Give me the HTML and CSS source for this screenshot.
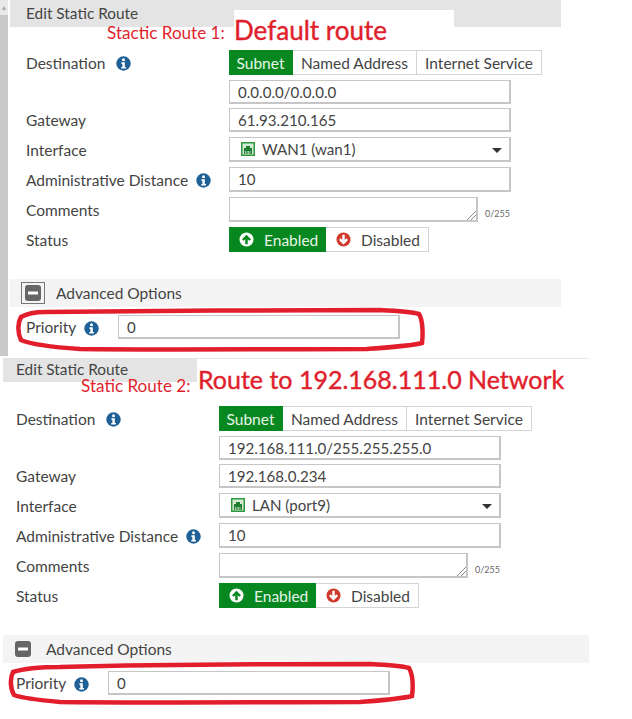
FILE: index.html
```html
<!DOCTYPE html>
<html lang="en">
<head>
<meta charset="utf-8">
<title>Edit Static Route</title>
<link rel="stylesheet" href="styles.css">
</head>
<body>
<svg width="0" height="0" class="defs">
  <defs>
    <symbol id="info" viewBox="0 0 16 16">
      <circle cx="8" cy="8" r="7.7" fill="#1f6096"/>
      <circle cx="8" cy="4" r="1.6" fill="#fff"/>
      <path d="M5.8 6.6h3.6v5h1.2v1.8H5.6v-1.8h1.2V8.4h-1z" fill="#fff"/>
    </symbol>
    <symbol id="up" viewBox="0 0 16 16">
      <circle cx="8" cy="8" r="7.5" fill="currentColor"/>
      <path d="M8 2.8 12.8 7.6 11 9.3 9.3 7.6V13H6.7V7.6L5 9.3 3.2 7.6z" fill="var(--glyph)"/>
    </symbol>
    <symbol id="down" viewBox="0 0 16 16">
      <circle cx="8" cy="8" r="7.5" fill="currentColor"/>
      <path d="M8 13.2 3.2 8.4 5 6.7 6.7 8.4V3h2.6v5.4L11 6.7l1.8 1.7z" fill="var(--glyph)"/>
    </symbol>
    <symbol id="port" viewBox="0 0 14 14">
      <rect width="14" height="14" fill="#2c9a3c"/>
      <rect x="1.5" y="1.5" width="11" height="11" fill="#d7e8d4"/>
      <path d="M3 12V6h2V4h4v2h2v6z" fill="#1f7f30"/>
      <path d="M4.5 9v3M6 9v3M7.5 9v3M9 9v3" stroke="#d7e8d4" stroke-width=".7"/>
    </symbol>
    <symbol id="minus" viewBox="0 0 16 16">
      <rect width="16" height="16" rx="3" fill="#666"/>
      <rect x="3" y="6.5" width="10" height="3" fill="#fff"/>
    </symbol>
  </defs>
</svg>

<div class="sheet">
  <section class="shot shot-one">
    <div class="scrollbar"><span class="scroll-cap">&#9650;</span></div>
    <div class="panel">
      <header class="title-bar"><span class="title">Edit Static Route</span></header>
      <div class="form">
        <div class="row">
          <div class="label">Destination<svg class="info info-wide"><use href="#info"/></svg></div>
          <div class="segments">
            <span class="seg seg-on seg-subnet">Subnet</span>
            <span class="seg seg-named">Named Address</span>
            <span class="seg seg-service">Internet Service</span>
          </div>
        </div>
        <div class="row row-low row-close">
          <div class="label"></div>
          <div class="field">0.0.0.0/0.0.0.0</div>
        </div>
        <div class="row row-low">
          <div class="label">Gateway</div>
          <div class="field">61.93.210.165</div>
        </div>
        <div class="row">
          <div class="label">Interface</div>
          <div class="field field-select">
            <svg class="port"><use href="#port"/></svg>WAN1 (wan1)<span class="caret"></span>
          </div>
        </div>
        <div class="row">
          <div class="label">Administrative Distance<svg class="info"><use href="#info"/></svg></div>
          <div class="field">10</div>
        </div>
        <div class="row">
          <div class="label">Comments</div>
          <div class="area">
            <svg class="grip" viewBox="0 0 10 10"><path d="M1 10 10 1M5 10l5-5" stroke="#888" fill="none"/></svg>
          </div>
          <span class="count">0/255</span>
        </div>
        <div class="row row-last">
          <div class="label">Status</div>
          <div class="segments">
            <span class="seg seg-on seg-enabled"><svg class="state state-up"><use href="#up"/></svg>Enabled</span>
            <span class="seg seg-disabled"><svg class="state state-down"><use href="#down"/></svg>Disabled</span>
          </div>
        </div>
      </div>
      <div class="advanced">
        <span class="minus-box"><svg class="minus"><use href="#minus"/></svg></span>
        <span>Advanced Options</span>
      </div>
      <div class="priority">
        <div class="label label-short">Priority<svg class="info"><use href="#info"/></svg></div>
        <div class="field">0</div>
      </div>
    </div>
  </section>

  <section class="shot shot-two">
    <div class="panel">
      <header class="title-bar"><span class="title">Edit Static Route</span></header>
      <div class="form">
        <div class="row">
          <div class="label">Destination<svg class="info info-wide"><use href="#info"/></svg></div>
          <div class="segments">
            <span class="seg seg-on seg-subnet">Subnet</span>
            <span class="seg seg-named">Named Address</span>
            <span class="seg seg-service">Internet Service</span>
          </div>
        </div>
        <div class="row row-low row-close">
          <div class="label"></div>
          <div class="field">192.168.111.0/255.255.255.0</div>
        </div>
        <div class="row row-low">
          <div class="label">Gateway</div>
          <div class="field">192.168.0.234</div>
        </div>
        <div class="row">
          <div class="label">Interface</div>
          <div class="field field-select">
            <svg class="port"><use href="#port"/></svg>LAN (port9)<span class="caret"></span>
          </div>
        </div>
        <div class="row">
          <div class="label">Administrative Distance<svg class="info"><use href="#info"/></svg></div>
          <div class="field">10</div>
        </div>
        <div class="row">
          <div class="label">Comments</div>
          <div class="area">
            <svg class="grip" viewBox="0 0 10 10"><path d="M1 10 10 1M5 10l5-5" stroke="#888" fill="none"/></svg>
          </div>
          <span class="count">0/255</span>
        </div>
        <div class="row row-last">
          <div class="label">Status</div>
          <div class="segments">
            <span class="seg seg-on seg-enabled"><svg class="state state-up"><use href="#up"/></svg>Enabled</span>
            <span class="seg seg-disabled"><svg class="state state-down"><use href="#down"/></svg>Disabled</span>
          </div>
        </div>
      </div>
      <div class="advanced">
        <span class="minus-box"><svg class="minus"><use href="#minus"/></svg></span>
        <span>Advanced Options</span>
      </div>
      <div class="priority">
        <div class="label label-short">Priority<svg class="info"><use href="#info"/></svg></div>
        <div class="field">0</div>
      </div>
    </div>
  </section>

  <div class="patch patch-one"></div>
  <div class="patch patch-two"></div>
  <span class="note note-small note-a">Stactic Route 1:</span>
  <span class="note note-big note-b">Default route</span>
  <span class="note note-small note-c">Static Route 2:</span>
  <span class="note note-big note-d">Route to 192.168.111.0 Network</span>
  <svg class="ovals" viewBox="0 0 632 719">
    <path d="M45 312C120 311 300 310 380 310 400 311 412 312 419 314 423 320 423 335 422 343 410 346 395 347 367 349 300 349 150 350 80 349 50 347 30 344 21 340 17 332 18 322 21 317 28 313 36 312 45 312Z"/>
    <path d="M60 667C140 665 290 664 370 664 390 665 402 666 409 668 413 675 413 688 412 696 400 699 385 700 360 702 300 702 130 703 60 702 38 700 22 698 14 695 10 688 10 678 13 672 25 668 40 667 60 667Z"/>
  </svg>
</div>
</body>
</html>
```
FILE: styles.css
```css
* { box-sizing: border-box; }

html, body {
  margin: 0;
  padding: 0;
  background: #fff;
}

.defs { position: absolute; }

.sheet {
  position: relative;
  width: 632px;
  height: 719px;
  overflow: hidden;
  font-family: Lato, "Open Sans", sans-serif;
  font-size: 15.5px;
  color: #444;
}

/* screenshot 1 */
.shot-one {
  display: flex;
  height: 356px;
}

.scrollbar {
  width: 8px;
  margin-right: 2px;
  height: 356px;
  background: #c9c9c9;
}

.scroll-cap {
  display: block;
  height: 15px;
  background: #e8e8e8;
  color: #aaa;
  font-size: 7px;
  line-height: 14px;
  text-align: center;
  overflow: hidden;
}

.panel { width: 551px; }

.title-bar {
  height: 27px;
  background: #e4e4e4;
  padding-left: 16px;
  line-height: 27px;
  font-size: 15.4px;
}

.form {
  padding: 23px 0 0 16px;
}

.row {
  display: flex;
  align-items: center;
  height: 25px;
  margin-bottom: 5px;
}

.row-low { height: 24px; }
.row-close { margin-bottom: 4px; }
.row-last { margin-bottom: 0; }

.label {
  display: flex;
  align-items: center;
  width: 203px;
  flex: none;
}

.label-short { width: 92px; }

.info {
  width: 15px;
  height: 15px;
  margin-left: 8px;
  position: relative;
  top: 1px;
}

.info-wide { margin-left: 11px; }

.segments {
  display: flex;
  height: 25px;
}

.seg {
  display: flex;
  align-items: center;
  justify-content: center;
  height: 25px;
  border: 1px solid #d4d4d4;
  border-left: 0;
  background: #fff;
}

.seg-on {
  background: #06871f;
  border-color: #06871f;
  color: #e8f4e8;
}

.seg-subnet { width: 64px; }
.seg-named { width: 124px; }
.seg-service { width: 125px; }
.seg-enabled { width: 97px; justify-content: flex-start; padding-left: 10px; }
.seg-disabled { width: 103px; justify-content: flex-start; padding-left: 10px; }

.state {
  width: 15px;
  height: 15px;
  margin-right: 10px;
  flex: none;
}

.state-up { color: #fff; --glyph: #06871f; }
.state-down { color: #cf3a2b; --glyph: #fff; }

.field {
  display: flex;
  align-items: center;
  width: 282px;
  height: 100%;
  padding-left: 8px;
  border: 1px solid #c6c6c6;
  border-bottom-width: 2px;
  border-right-width: 2px;
  background: #fff;
  font-size: 15.1px;
}

.field-select { position: relative; }

.port {
  width: 14px;
  height: 14px;
  margin: 0 7px 0 3px;
}

.caret {
  position: absolute;
  right: 7px;
  top: 10px;
  border-left: 5px solid transparent;
  border-right: 5px solid transparent;
  border-top: 5px solid #333;
}

.area {
  position: relative;
  width: 249px;
  height: 25px;
  border: 1px solid #c6c6c6;
  border-bottom-width: 2px;
  border-right-width: 2px;
}

.grip {
  position: absolute;
  right: 0;
  bottom: 0;
  width: 10px;
  height: 10px;
}

.count {
  margin: 7px 0 0 7px;
  font-size: 9px;
  color: #666;
}

.advanced {
  display: flex;
  align-items: center;
  height: 28px;
  margin-top: 27px;
  background: #f4f4f4;
}

.minus-box {
  display: flex;
  align-items: center;
  justify-content: center;
  width: 24px;
  height: 22px;
  margin: 0 11px 0 11px;
  border: 1px solid #777;
}

.minus {
  width: 16px;
  height: 16px;
}

.priority {
  display: flex;
  align-items: center;
  height: 24px;
  margin-top: 8px;
  padding-left: 16px;
}

/* screenshot 2 */
.shot-two {
  padding-top: 2px;
}

.shot-two .panel {
  width: 589px;
  padding-left: 3px;
}

.shot-two .title-bar {
  height: 24px;
  line-height: 22px;
  padding-left: 13px;
  background: linear-gradient(#e8e8e8 1px, #fff 1px);
}

.shot-two .title {
  display: block;
  width: 194px;
  height: 24px;
  margin-left: -13px;
  padding-left: 13px;
  background: #e4e4e4;
}

.shot-two .form {
  padding: 24px 0 0 13px;
}

.shot-two .advanced { background: #f4f4f4; }

.shot-two .minus-box {
  width: 16px;
  margin: 0 15px 0 12px;
  border: 0;
}

.shot-two .priority { padding-left: 13px; }

/* pasted annotations */
.patch {
  position: absolute;
  background: #fff;
}

.patch-one {
  left: 234px;
  top: 10px;
  width: 220px;
  height: 17px;
}

.patch-two {
  left: 197px;
  top: 359px;
  width: 392px;
  height: 23px;
}

.note {
  position: absolute;
  color: #e01f2c;
  white-space: nowrap;
  line-height: 1;
}

.note-small { font-size: 17.1px; }
.note-big { font-size: 25px; -webkit-text-stroke: 0.4px #e01f2c; }

.note-a { left: 107px; top: 24px; }
.note-b { left: 234px; top: 17px; font-size: 26px; }
.note-c { left: 81px; top: 377px; }
.note-d { left: 198px; top: 367px; }

.ovals {
  position: absolute;
  left: 0;
  top: 0;
  width: 632px;
  height: 719px;
  pointer-events: none;
}

.ovals path {
  fill: none;
  stroke: #e31e2c;
  stroke-width: 4.5;
}
```
